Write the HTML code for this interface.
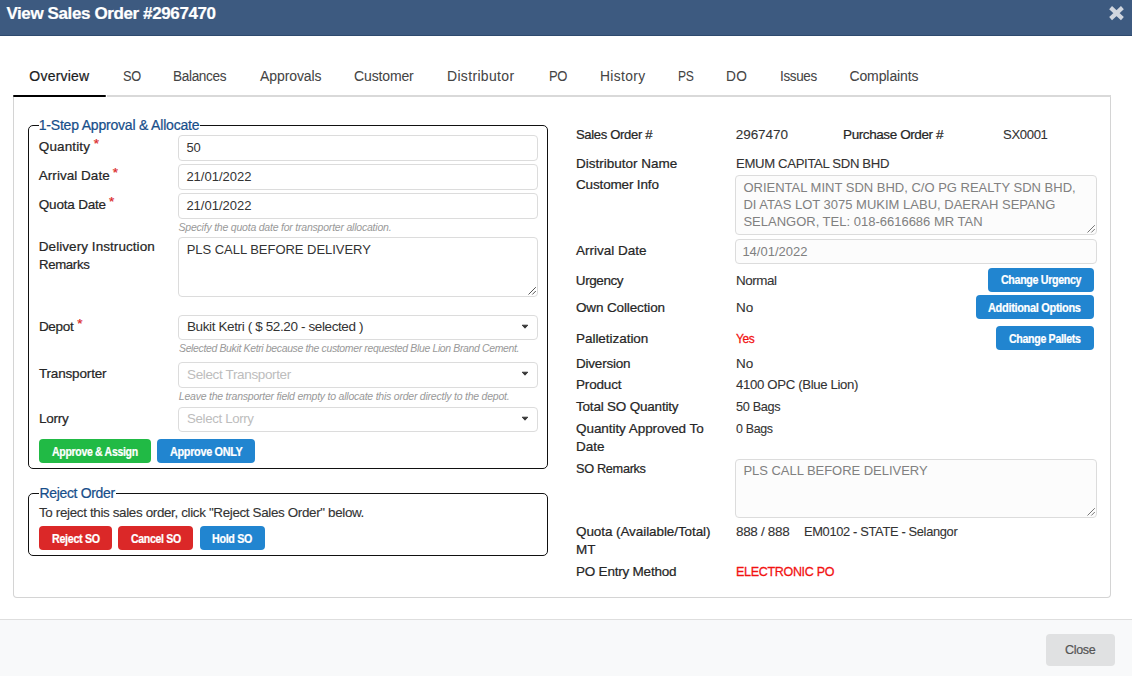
<!DOCTYPE html>
<html><head><meta charset="utf-8">
<style>
*{box-sizing:border-box;margin:0;padding:0}
html,body{width:1132px;height:676px;overflow:hidden;background:#fff;font-family:"Liberation Sans",sans-serif}
.a{position:absolute}
.t{position:absolute;white-space:nowrap;line-height:normal;transform-origin:0 0;-webkit-text-stroke:0.22px currentColor}
</style></head><body>
<div class="a" style="left:0;top:0;width:1132px;height:36px;background:#3d5a80;border-bottom:1px solid #2e4a6e"></div>
<svg class="a" style="left:1105px;top:2px" width="24" height="24" viewBox="0 0 24 24"><path d="M5.6 5.6 L17.4 16.6 M17.4 5.6 L5.6 16.6" stroke="#d1d6de" stroke-width="4.2" fill="none"/></svg>
<div class="a" style="left:107px;top:95px;width:1004px;height:2px;background:#d9d9d9"></div>
<div class="a" style="left:13px;top:95px;width:93px;height:2px;background:#000;border-radius:1px"></div>
<div class="a" style="left:13px;top:97px;width:1098px;height:501px;border:1px solid #d4d4d4;border-top:none;border-radius:0 0 4px 4px"></div>
<!-- fieldset 1 -->
<div class="a" style="left:28px;top:125px;width:520px;height:344px;border:1px solid #111;border-radius:5px"></div>
<div class="a" style="left:39px;top:120px;width:161px;height:8px;background:#fff"></div>
<!-- inputs -->
<div class="a" style="left:178px;top:135px;width:360px;height:26px;border:1px solid #dcdcdc;border-radius:4px"></div>
<div class="a" style="left:178px;top:164px;width:360px;height:26px;border:1px solid #dcdcdc;border-radius:4px"></div>
<div class="a" style="left:178px;top:193px;width:360px;height:26px;border:1px solid #dcdcdc;border-radius:4px"></div>
<div class="a" style="left:178px;top:237px;width:360px;height:60px;border:1px solid #dcdcdc;border-radius:4px"></div>
<svg class="a" style="left:526px;top:285px" width="12" height="12"><path d="M2.5 9.5 L9.8 2.2 M6.3 9.5 L9.8 6" stroke="#555" stroke-width="1" fill="none"/></svg>
<div class="a" style="left:178px;top:315px;width:360px;height:25px;border:1px solid #dcdcdc;border-radius:4px"></div>
<div class="a" style="left:178px;top:362px;width:360px;height:26px;border:1px solid #dcdcdc;border-radius:4px"></div>
<div class="a" style="left:178px;top:407px;width:360px;height:25px;border:1px solid #dcdcdc;border-radius:4px"></div>
<svg class="a" style="left:520px;top:323px" width="10" height="7"><path d="M2.2 2.2 L7.8 2.2 L5 5.2 Z" fill="#333" stroke="#333" stroke-width="0.9" stroke-linejoin="round"/></svg>
<svg class="a" style="left:520px;top:370px" width="10" height="7"><path d="M2.2 2.2 L7.8 2.2 L5 5.2 Z" fill="#333" stroke="#333" stroke-width="0.9" stroke-linejoin="round"/></svg>
<svg class="a" style="left:520px;top:415px" width="10" height="7"><path d="M2.2 2.2 L7.8 2.2 L5 5.2 Z" fill="#333" stroke="#333" stroke-width="0.9" stroke-linejoin="round"/></svg>
<div class="a" style="left:39px;top:439px;width:112px;height:24px;background:#21ba45;border-radius:4px"></div>
<div class="a" style="left:157px;top:439px;width:98px;height:24px;background:#2185d0;border-radius:4px"></div>
<!-- fieldset 2 -->
<div class="a" style="left:28px;top:493px;width:520px;height:63px;border:1px solid #111;border-radius:5px"></div>
<div class="a" style="left:39px;top:488px;width:77px;height:8px;background:#fff"></div>
<div class="a" style="left:39px;top:526px;width:73px;height:24px;background:#db2828;border-radius:4px"></div>
<div class="a" style="left:118px;top:526px;width:75px;height:24px;background:#db2828;border-radius:4px"></div>
<div class="a" style="left:200px;top:526px;width:65px;height:24px;background:#2185d0;border-radius:4px"></div>
<!-- right -->
<div class="a" style="left:735px;top:175px;width:362px;height:60px;border:1px solid #dcdcdc;border-radius:4px;background:#fcfcfc"></div>
<svg class="a" style="left:1085px;top:223px" width="12" height="12"><path d="M2.5 9.5 L9.8 2.2 M6.3 9.5 L9.8 6" stroke="#777" stroke-width="1" fill="none"/></svg>
<div class="a" style="left:735px;top:239px;width:362px;height:25px;border:1px solid #dcdcdc;border-radius:4px;background:#fcfcfc"></div>
<div class="a" style="left:988px;top:268px;width:106px;height:24px;background:#2185d0;border-radius:4px"></div>
<div class="a" style="left:976px;top:295px;width:118px;height:24px;background:#2185d0;border-radius:4px"></div>
<div class="a" style="left:996px;top:326px;width:98px;height:24px;background:#2185d0;border-radius:4px"></div>
<div class="a" style="left:735px;top:459px;width:362px;height:59px;border:1px solid #dcdcdc;border-radius:4px;background:#fcfcfc"></div>
<svg class="a" style="left:1085px;top:506px" width="12" height="12"><path d="M2.5 9.5 L9.8 2.2 M6.3 9.5 L9.8 6" stroke="#777" stroke-width="1" fill="none"/></svg>
<!-- footer -->
<div class="a" style="left:0;top:619px;width:1132px;height:57px;background:#f8f9fa;border-top:1px solid #dedede"></div>
<div class="a" style="left:1046px;top:634px;width:69px;height:32px;background:#e0e1e2;border-radius:4px"></div>

<div class="t" style="left:6.40px;top:4.00px;font-size:17px;color:#fff;font-weight:bold;letter-spacing:-0.388px">View Sales Order #2967470</div>
<div class="t" style="left:29.30px;top:68.00px;font-size:14px;color:#1b1c1d;letter-spacing:0.224px">Overview</div>
<div class="t" style="left:122.50px;top:68.00px;font-size:14px;color:#444;letter-spacing:-0.350px;transform:scaleX(0.9118);-webkit-text-stroke:0.05px currentColor">SO</div>
<div class="t" style="left:173.40px;top:68.00px;font-size:14px;color:#444;letter-spacing:-0.350px;transform:scaleX(0.9718);-webkit-text-stroke:0.05px currentColor">Balances</div>
<div class="t" style="left:260.10px;top:68.00px;font-size:14px;color:#444;letter-spacing:-0.107px;-webkit-text-stroke:0.05px currentColor">Approvals</div>
<div class="t" style="left:354.10px;top:68.00px;font-size:14px;color:#444;letter-spacing:-0.146px;-webkit-text-stroke:0.05px currentColor">Customer</div>
<div class="t" style="left:447.30px;top:68.00px;font-size:14px;color:#444;letter-spacing:0.350px;transform:scaleX(0.9967);-webkit-text-stroke:0.05px currentColor">Distributor</div>
<div class="t" style="left:548.50px;top:68.00px;font-size:14px;color:#444;letter-spacing:-0.350px;transform:scaleX(0.9308);-webkit-text-stroke:0.05px currentColor">PO</div>
<div class="t" style="left:599.70px;top:68.00px;font-size:14px;color:#444;letter-spacing:0.350px;transform:scaleX(0.9864);-webkit-text-stroke:0.05px currentColor">History</div>
<div class="t" style="left:677.60px;top:68.00px;font-size:14px;color:#444;letter-spacing:-0.350px;transform:scaleX(0.8645);-webkit-text-stroke:0.05px currentColor">PS</div>
<div class="t" style="left:725.70px;top:68.00px;font-size:14px;color:#444;letter-spacing:0.350px;transform:scaleX(0.9797);-webkit-text-stroke:0.05px currentColor">DO</div>
<div class="t" style="left:779.70px;top:68.00px;font-size:14px;color:#444;letter-spacing:-0.350px;transform:scaleX(0.9607);-webkit-text-stroke:0.05px currentColor">Issues</div>
<div class="t" style="left:849.40px;top:68.00px;font-size:14px;color:#444;letter-spacing:-0.092px;-webkit-text-stroke:0.05px currentColor">Complaints</div>
<div class="t" style="left:38.70px;top:117.00px;font-size:14px;color:#174e8a;letter-spacing:-0.197px">1-Step Approval &amp; Allocate</div>
<div class="t" style="left:38.80px;top:139.00px;font-size:13.5px;color:#262626;letter-spacing:0.125px">Quantity</div>
<div class="t" style="left:38.80px;top:168.00px;font-size:13.5px;color:#262626;letter-spacing:0.035px">Arrival Date</div>
<div class="t" style="left:38.80px;top:196.80px;font-size:13.5px;color:#262626;letter-spacing:-0.193px">Quota Date</div>
<div class="t" style="left:186.40px;top:139.80px;font-size:13px;color:#333;-webkit-text-stroke:0">50</div>
<div class="t" style="left:186.40px;top:168.80px;font-size:13px;color:#333;-webkit-text-stroke:0">21/01/2022</div>
<div class="t" style="left:186.40px;top:197.80px;font-size:13px;color:#333;-webkit-text-stroke:0">21/01/2022</div>
<div class="t" style="left:178.50px;top:221.00px;font-size:10.5px;color:#999;font-style:italic;letter-spacing:-0.213px;-webkit-text-stroke:0">Specify the quota date for transporter allocation.</div>
<div class="t" style="left:38.80px;top:239.20px;font-size:13.5px;color:#262626;letter-spacing:0.059px">Delivery Instruction</div>
<div class="t" style="left:38.80px;top:256.80px;font-size:13.5px;color:#262626;letter-spacing:-0.350px;transform:scaleX(0.9778)">Remarks</div>
<div class="t" style="left:186.70px;top:241.80px;font-size:13px;color:#333;letter-spacing:-0.034px;-webkit-text-stroke:0">PLS CALL BEFORE DELIVERY</div>
<div class="t" style="left:38.90px;top:319.20px;font-size:13.5px;color:#262626;letter-spacing:-0.318px">Depot</div>
<div class="t" style="left:187.00px;top:319.40px;font-size:13.5px;color:#333;letter-spacing:-0.382px;-webkit-text-stroke:0">Bukit Ketri ( $ 52.20 - selected )</div>
<div class="t" style="left:178.80px;top:341.60px;font-size:10.5px;color:#999;font-style:italic;letter-spacing:-0.350px;transform:scaleX(0.9962);-webkit-text-stroke:0">Selected Bukit Ketri because the customer requested Blue Lion Brand Cement.</div>
<div class="t" style="left:38.90px;top:366.00px;font-size:13.5px;color:#262626;letter-spacing:-0.158px">Transporter</div>
<div class="t" style="left:187.00px;top:367.00px;font-size:13.5px;color:#bdbdbd;letter-spacing:-0.350px;transform:scaleX(0.9992);-webkit-text-stroke:0">Select Transporter</div>
<div class="t" style="left:178.80px;top:390.00px;font-size:10.5px;color:#999;font-style:italic;letter-spacing:-0.225px;-webkit-text-stroke:0">Leave the transporter field empty to allocate this order directly to the depot.</div>
<div class="t" style="left:38.90px;top:411.00px;font-size:13.5px;color:#262626;letter-spacing:-0.252px">Lorry</div>
<div class="t" style="left:187.00px;top:410.60px;font-size:13.5px;color:#bdbdbd;letter-spacing:-0.350px;transform:scaleX(0.9821);-webkit-text-stroke:0">Select Lorry</div>
<div class="t" style="left:51.70px;top:445.00px;font-size:12px;color:#fff;font-weight:bold;letter-spacing:-0.350px;transform:scaleX(0.8757)">Approve &amp; Assign</div>
<div class="t" style="left:169.50px;top:445.00px;font-size:12px;color:#fff;font-weight:bold;letter-spacing:-0.350px;transform:scaleX(0.9057)">Approve ONLY</div>
<div class="t" style="left:39.50px;top:485.20px;font-size:14px;color:#174e8a;letter-spacing:-0.336px">Reject Order</div>
<div class="t" style="left:39.00px;top:505.00px;font-size:13.5px;color:#333;letter-spacing:-0.350px;transform:scaleX(0.9927);-webkit-text-stroke:0.12px currentColor">To reject this sales order, click "Reject Sales Order" below.</div>
<div class="t" style="left:51.60px;top:531.60px;font-size:12px;color:#fff;font-weight:bold;letter-spacing:-0.350px;transform:scaleX(0.8927)">Reject SO</div>
<div class="t" style="left:130.90px;top:531.60px;font-size:12px;color:#fff;font-weight:bold;letter-spacing:-0.350px;transform:scaleX(0.8791)">Cancel SO</div>
<div class="t" style="left:211.90px;top:531.60px;font-size:12px;color:#fff;font-weight:bold;letter-spacing:-0.350px;transform:scaleX(0.8912)">Hold SO</div>
<div class="t" style="left:575.80px;top:127.00px;font-size:13.5px;color:#262626;letter-spacing:-0.350px;transform:scaleX(0.9676)">Sales Order #</div>
<div class="t" style="left:735.80px;top:127.00px;font-size:13.5px;color:#333;letter-spacing:-0.075px;-webkit-text-stroke:0.1px currentColor">2967470</div>
<div class="t" style="left:843.10px;top:127.00px;font-size:13.5px;color:#262626;letter-spacing:-0.416px">Purchase Order #</div>
<div class="t" style="left:1002.60px;top:127.00px;font-size:13.5px;color:#333;letter-spacing:-0.350px;transform:scaleX(0.9700);-webkit-text-stroke:0.1px currentColor">SX0001</div>
<div class="t" style="left:576.00px;top:156.00px;font-size:13.5px;color:#262626">Distributor Name</div>
<div class="t" style="left:736.00px;top:156.00px;font-size:13.5px;color:#333;letter-spacing:-0.350px;transform:scaleX(0.9735);-webkit-text-stroke:0.1px currentColor">EMUM CAPITAL SDN BHD</div>
<div class="t" style="left:576.00px;top:177.00px;font-size:13.5px;color:#262626;letter-spacing:-0.156px">Customer Info</div>
<div class="t" style="left:743.40px;top:180.00px;font-size:13px;color:#808080;-webkit-text-stroke:0">ORIENTAL MINT SDN BHD, C/O PG REALTY SDN BHD,</div>
<div class="t" style="left:743.40px;top:197.00px;font-size:13px;color:#808080;-webkit-text-stroke:0">DI ATAS LOT 3075 MUKIM LABU, DAERAH SEPANG</div>
<div class="t" style="left:743.40px;top:213.80px;font-size:13px;color:#808080;-webkit-text-stroke:0">SELANGOR, TEL: 018-6616686 MR TAN</div>
<div class="t" style="left:576.00px;top:243.00px;font-size:13.5px;color:#262626">Arrival Date</div>
<div class="t" style="left:742.40px;top:244.00px;font-size:13px;color:#808080;-webkit-text-stroke:0">14/01/2022</div>
<div class="t" style="left:575.80px;top:273.40px;font-size:13.5px;color:#262626;letter-spacing:-0.420px">Urgency</div>
<div class="t" style="left:736.00px;top:273.40px;font-size:13.5px;color:#333;letter-spacing:-0.450px;transform:scaleX(0.9940);-webkit-text-stroke:0.1px currentColor">Normal</div>
<div class="t" style="left:1000.50px;top:273.20px;font-size:12px;color:#fff;font-weight:bold;letter-spacing:-0.350px;transform:scaleX(0.8867)">Change Urgency</div>
<div class="t" style="left:576.00px;top:300.00px;font-size:13.5px;color:#262626;letter-spacing:-0.129px">Own Collection</div>
<div class="t" style="left:736.00px;top:300.00px;font-size:13.5px;color:#333;-webkit-text-stroke:0.1px currentColor">No</div>
<div class="t" style="left:987.90px;top:300.70px;font-size:12px;color:#fff;font-weight:bold;letter-spacing:-0.350px;transform:scaleX(0.9165)">Additional Options</div>
<div class="t" style="left:576.00px;top:331.20px;font-size:13.5px;color:#262626;letter-spacing:-0.040px">Palletization</div>
<div class="t" style="left:736.00px;top:331.20px;font-size:13.5px;color:#f21212;letter-spacing:-0.350px;transform:scaleX(0.8819);-webkit-text-stroke:0.3px currentColor">Yes</div>
<div class="t" style="left:1008.90px;top:331.70px;font-size:12px;color:#fff;font-weight:bold;letter-spacing:-0.350px;transform:scaleX(0.8827)">Change Pallets</div>
<div class="t" style="left:576.00px;top:356.00px;font-size:13.5px;color:#262626;letter-spacing:-0.220px">Diversion</div>
<div class="t" style="left:736.00px;top:356.00px;font-size:13.5px;color:#333;-webkit-text-stroke:0.1px currentColor">No</div>
<div class="t" style="left:576.00px;top:377.20px;font-size:13.5px;color:#262626;letter-spacing:-0.162px">Product</div>
<div class="t" style="left:736.00px;top:377.20px;font-size:13.5px;color:#333;letter-spacing:-0.350px;transform:scaleX(0.9766);-webkit-text-stroke:0.1px currentColor">4100 OPC (Blue Lion)</div>
<div class="t" style="left:576.00px;top:399.20px;font-size:13.5px;color:#262626;letter-spacing:-0.203px">Total SO Quantity</div>
<div class="t" style="left:736.00px;top:399.20px;font-size:13.5px;color:#333;letter-spacing:-0.350px;transform:scaleX(0.9396);-webkit-text-stroke:0.1px currentColor">50 Bags</div>
<div class="t" style="left:576.00px;top:421.20px;font-size:13.5px;color:#262626;letter-spacing:-0.059px">Quantity Approved To</div>
<div class="t" style="left:576.00px;top:439.00px;font-size:13.5px;color:#262626">Date</div>
<div class="t" style="left:736.00px;top:421.20px;font-size:13.5px;color:#333;letter-spacing:-0.350px;transform:scaleX(0.9182);-webkit-text-stroke:0.1px currentColor">0 Bags</div>
<div class="t" style="left:576.00px;top:461.00px;font-size:13.5px;color:#262626;letter-spacing:-0.350px;transform:scaleX(0.9441)">SO Remarks</div>
<div class="t" style="left:743.40px;top:462.80px;font-size:13px;color:#808080;letter-spacing:-0.034px;-webkit-text-stroke:0">PLS CALL BEFORE DELIVERY</div>
<div class="t" style="left:576.00px;top:523.80px;font-size:13.5px;color:#262626;letter-spacing:-0.083px">Quota (Available/Total)</div>
<div class="t" style="left:576.00px;top:541.50px;font-size:13.5px;color:#262626">MT</div>
<div class="t" style="left:736.00px;top:523.80px;font-size:13.5px;color:#333;letter-spacing:-0.324px;-webkit-text-stroke:0.1px currentColor">888 / 888</div>
<div class="t" style="left:803.60px;top:523.80px;font-size:13.5px;color:#333;letter-spacing:-0.350px;transform:scaleX(0.9521);-webkit-text-stroke:0.1px currentColor">EM0102 - STATE - Selangor</div>
<div class="t" style="left:576.00px;top:563.50px;font-size:13.5px;color:#262626;letter-spacing:-0.217px">PO Entry Method</div>
<div class="t" style="left:736.00px;top:563.50px;font-size:13.5px;color:#f21212;letter-spacing:-0.350px;transform:scaleX(0.9280);-webkit-text-stroke:0.3px currentColor">ELECTRONIC PO</div>
<div class="t" style="left:1065.00px;top:642.00px;font-size:13.5px;color:#555;letter-spacing:-0.350px;transform:scaleX(0.9264)">Close</div>
<div class="t" style="left:93.70px;top:135.60px;font-size:13.5px;color:#db2828">*</div>
<div class="t" style="left:112.70px;top:164.60px;font-size:13.5px;color:#db2828">*</div>
<div class="t" style="left:108.90px;top:193.60px;font-size:13.5px;color:#db2828">*</div>
<div class="t" style="left:77.30px;top:316.10px;font-size:13.5px;color:#db2828">*</div>
</body></html>
